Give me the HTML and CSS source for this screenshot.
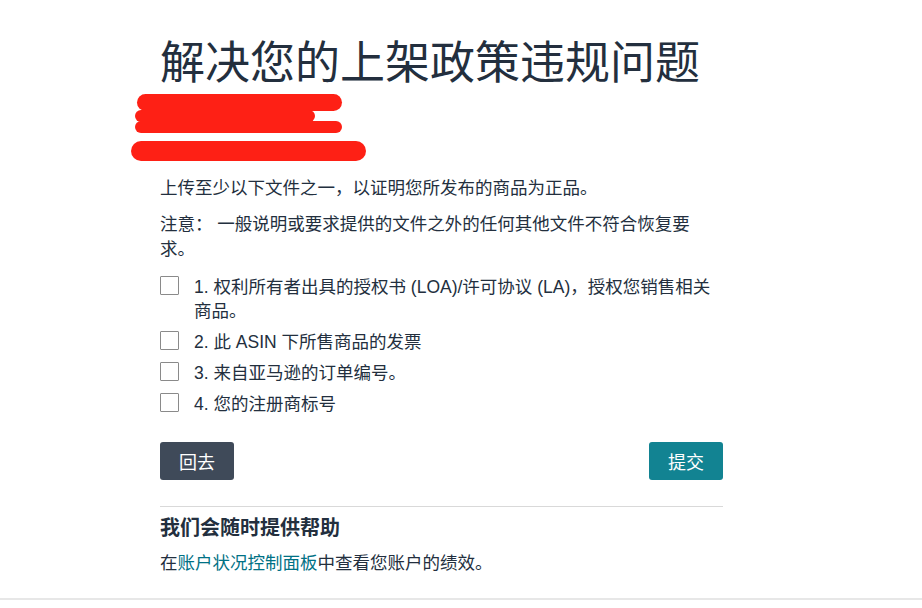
FILE: index.html
```html
<!DOCTYPE html>
<html lang="zh-CN">
<head>
    <meta charset="UTF-8">
    <title>解决您的上架政策违规问题</title>
    <link rel="stylesheet" href="styles.css">
</head>
<body>
    <div class="page">
        <div class="container">
            <h1>解决您的上架政策违规问题</h1>

            <!-- ASIN details, scribbled out in the screenshot -->
            <div class="redacted">
                <div class="mark mark-1"></div>
                <div class="mark mark-2"></div>
                <div class="mark mark-3"></div>
                <div class="mark mark-4"></div>
            </div>

            <p class="lead">上传至少以下文件之一，以证明您所发布的商品为正品。</p>
            <p class="note">注意： 一般说明或要求提供的文件之外的任何其他文件不符合恢复要求。</p>

            <ul class="options">
                <li><span class="box"></span><span>1. 权利所有者出具的授权书 (LOA)/许可协议 (LA)，授权您销售相关商品。</span></li>
                <li><span class="box"></span><span>2. 此 ASIN 下所售商品的发票</span></li>
                <li><span class="box"></span><span>3. 来自亚马逊的订单编号。</span></li>
                <li><span class="box"></span><span>4. 您的注册商标号</span></li>
            </ul>

            <div class="actions">
                <button class="btn btn-back">回去</button>
                <button class="btn btn-submit">提交</button>
            </div>

            <div class="help">
                <h2>我们会随时提供帮助</h2>
                <p>在<a href="#">账户状况控制面板</a>中查看您账户的绩效。</p>
            </div>
        </div>
    </div>
</body>
</html>
```

FILE: styles.css
```css
body {
    margin: 0;
    background: #fff;
    color: #232f3e;
    font-family: "Liberation Sans", "Noto Sans CJK SC", sans-serif;
    font-size: 17.5px;
}

.page {
    border-bottom: 2px solid #e7e7e7;
}

.container {
    width: 563px;
    margin-left: 160px;
    padding-top: 37px;
    padding-bottom: 23px;
}

h1 {
    margin: 0;
    font-size: 45px;
    font-weight: normal;
    line-height: 54px;
    color: #232f3e;
}

.redacted {
    position: relative;
    height: 72px;
    margin-left: -29px;
}

.mark {
    position: absolute;
    background: #fe2015;
    border-radius: 10px;
}

.mark-1 { left: 6px; top: 3px; width: 205px; height: 17px; }
.mark-2 { left: 4px; top: 19px; width: 180px; height: 12px; }
.mark-3 { left: 4px; top: 30px; width: 207px; height: 12px; }
.mark-4 { left: 0; top: 50px; width: 235px; height: 20px; }

p {
    margin: 0;
}

.lead {
    margin-top: 13px;
    line-height: 24px;
}

.note {
    margin-top: 12px;
    line-height: 25px;
    max-width: 540px;
}

.options {
    list-style: none;
    margin: 13px 0 0;
    padding: 0;
    display: flex;
    flex-direction: column;
    gap: 7px;
}

.options li {
    display: flex;
    align-items: flex-start;
    gap: 15px;
    line-height: 24px;
}

.box {
    flex: none;
    width: 17px;
    height: 17px;
    margin-top: 1px;
    border: 1.5px solid #8a8a8a;
    border-radius: 1px;
}

.actions {
    display: flex;
    justify-content: space-between;
    margin-top: 26px;
}

.btn {
    height: 38px;
    padding: 0 19px;
    border: none;
    border-radius: 3px;
    color: #fff;
    font-family: inherit;
    font-size: 18px;
    cursor: pointer;
}

.btn-back {
    background: #3f4a59;
}

.btn-submit {
    background: #128392;
}

.help {
    margin-top: 26px;
    border-top: 1px solid #d9d9d9;
}

.help h2 {
    margin: 7px 0 0;
    font-size: 20px;
    line-height: 28px;
    font-weight: bold;
}

.help p {
    margin-top: 9px;
    line-height: 24px;
}

.help a {
    color: #007185;
    text-decoration: none;
}
```
